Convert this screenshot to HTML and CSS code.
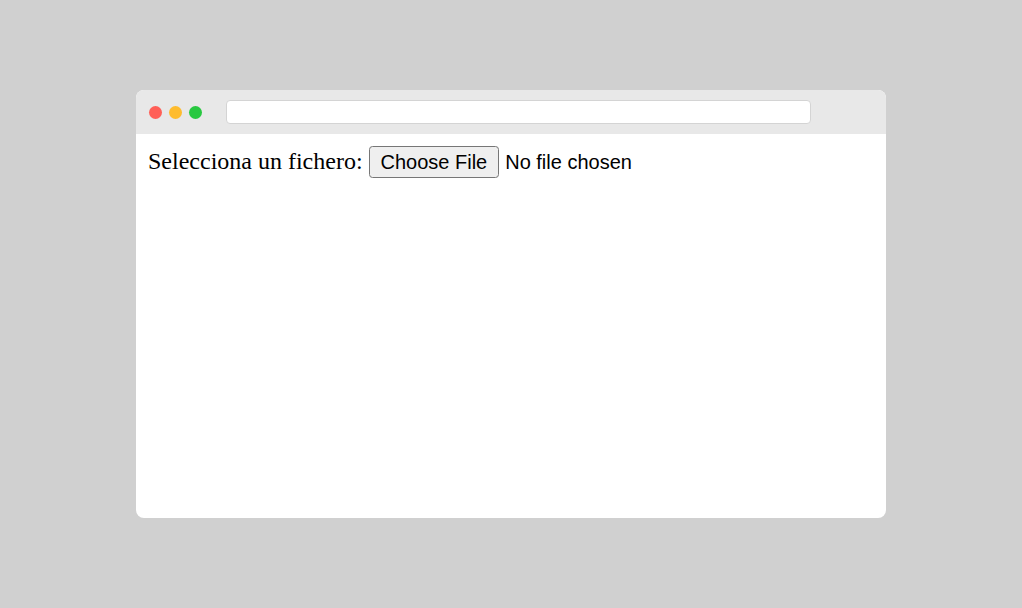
FILE: index.html
```html
<!DOCTYPE html>
<html>
<head>
<meta charset="utf-8">
<link rel="stylesheet" href="styles.css">
</head>
<body>
<div class="stage">
  <div class="window">
    <div class="titlebar">
      <div class="dots">
        <span class="dot red"></span>
        <span class="dot yellow"></span>
        <span class="dot green"></span>
      </div>
      <div class="address"></div>
    </div>
    <div class="content">
      <div class="page">
        <label class="label" for="f">Selecciona un fichero:</label> <input class="file" id="f" type="file">
      </div>
    </div>
  </div>
</div>
</body>
</html>
```
FILE: styles.css
```css
html, body {
  margin: 0;
  padding: 0;
  background: #d0d0d0;
}
.stage {
  width: 1022px;
  height: 608px;
  display: flex;
  padding: 90px 0 0 136px;
  box-sizing: border-box;
}
.window {
  width: 750px;
  height: 428px;
  background: #ffffff;
  border-radius: 8px;
  overflow: hidden;
  display: flex;
  flex-direction: column;
}
.titlebar {
  height: 44px;
  flex: none;
  background: #e8e8e8;
  display: flex;
  align-items: center;
  padding-left: 13px;
  box-sizing: border-box;
}
.dots {
  display: flex;
  gap: 7px;
}
.dot {
  width: 13px;
  height: 13px;
  border-radius: 50%;
  display: block;
}
.red { background: #ff5f57; }
.yellow { background: #febc2e; }
.green { background: #28c840; }
.address {
  margin-left: 24px;
  width: 583px;
  height: 22px;
  background: #ffffff;
  border: 1px solid #d4d4d4;
  border-radius: 4px;
}
.content {
  zoom: 1.5;
  flex: 1;
}
.page {
  padding: 8px;
  font-family: "Liberation Serif", "Times New Roman", serif;
  font-size: 16px;
  color: #000;
}
.file {
  font-family: "Liberation Sans", Arial, sans-serif;
  font-size: 13.333px;
}
```
